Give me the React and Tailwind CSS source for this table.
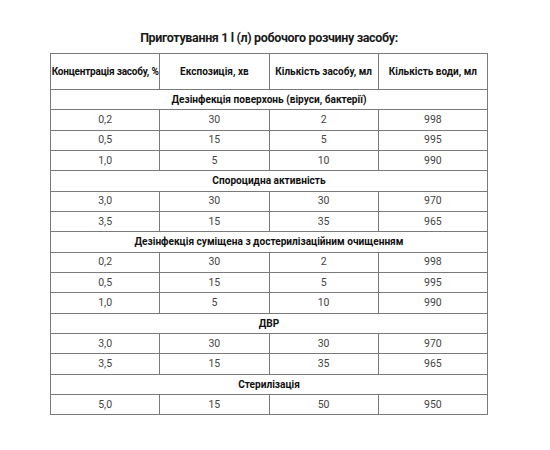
import React from 'react';

const headers = ['Концентрація засобу, %', 'Експозиція, хв', 'Кількість засобу, мл', 'Кількість води, мл'];

const sections = [
  { title: 'Дезінфекція поверхонь (віруси, бактерії)', rows: [['0,2', '30', '2', '998'], ['0,5', '15', '5', '995'], ['1,0', '5', '10', '990']] },
  { title: 'Спороцидна активність', rows: [['3,0', '30', '30', '970'], ['3,5', '15', '35', '965']] },
  { title: 'Дезінфекція суміщена з достерилізаційним очищенням', rows: [['0,2', '30', '2', '998'], ['0,5', '15', '5', '995'], ['1,0', '5', '10', '990']] },
  { title: 'ДВР', rows: [['3,0', '30', '30', '970'], ['3,5', '15', '35', '965']] },
  { title: 'Стерилізація', rows: [['5,0', '15', '50', '950']] },
];

export default function App() {
  return (
    <div className="w-[550px] h-[450px] bg-white pt-[29px] text-[#222]" style={{ fontFamily: 'Roboto, "Noto Sans", sans-serif' }}>
      <h2 className="ml-[50px] w-[438px] text-center text-[12.5px] tracking-[-0.35px] font-bold leading-[18px] text-[#1a1a1a]">
        Приготування 1 l (л) робочого розчину засобу:
      </h2>
      <table className="ml-[50px] mt-[6px] w-[438px] border-collapse table-fixed">
        <thead>
          <tr className="h-[36px]">
            {headers.map((h, i) => (
              <th key={i} className={`border border-[#7a7a7a] p-0 font-bold text-[#111] ${i === 0 ? 'text-[10px] tracking-[-0.2px]' : 'text-[10px]'}`}>{h}</th>
            ))}
          </tr>
        </thead>
        <tbody>
          {sections.map((s, si) => (
            <React.Fragment key={si}>
              <tr className="h-[20.34px]">
                <td colSpan={4} className="border border-[#7a7a7a] p-0 text-center text-[10.1px] font-bold text-[#111]">{s.title}</td>
              </tr>
              {s.rows.map((r, ri) => (
                <tr key={ri} className="h-[20.34px]">
                  {r.map((c, ci) => (
                    <td key={ci} className="border border-[#7a7a7a] p-0 text-center text-[10.5px] text-[#444]">{c}</td>
                  ))}
                </tr>
              ))}
            </React.Fragment>
          ))}
        </tbody>
      </table>
    </div>
  );
}
